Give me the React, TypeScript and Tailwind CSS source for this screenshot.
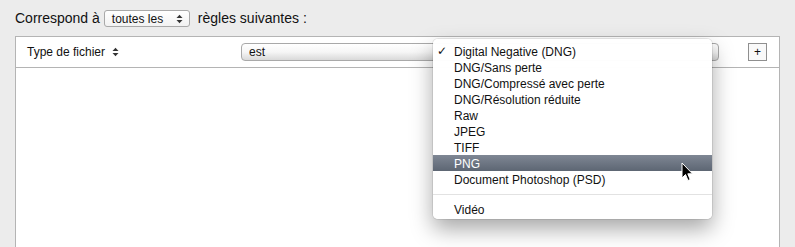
import React from "react";

const items = [
  "Digital Negative (DNG)",
  "DNG/Sans perte",
  "DNG/Compressé avec perte",
  "DNG/Résolution réduite",
  "Raw",
  "JPEG",
  "TIFF",
  "PNG",
  "Document Photoshop (PSD)",
];

function UpDown({ className = "" }: { className?: string }) {
  return (
    <svg width="7" height="10" viewBox="0 0 7 10" className={className}>
      <path d="M0.5 4 L3.5 0.8 L6.5 4 Z" fill="#333" />
      <path d="M0.5 6 L3.5 9.2 L6.5 6 Z" fill="#333" />
    </svg>
  );
}

export default function App() {
  return (
    <div className="relative w-[795px] h-[247px] overflow-hidden bg-[#ececec] text-[#111] font-['Liberation_Sans',Arial,sans-serif]">
      <div className="flex items-center h-[17px] mt-[10px] pl-[15px] text-[14px]">
        <span>Correspond à</span>
        <div className="ml-[4px] flex items-center w-[86px] h-[17px] rounded-[3px] border border-[#a9a9a9] bg-gradient-to-b from-white to-[#f2f2f2] pl-[7px] pr-[6px] text-[12px]">
          <span className="flex-1 pt-px">toutes les</span>
          <UpDown />
        </div>
        <span className="ml-[8px]">règles suivantes :</span>
      </div>

      <div className="ml-[15px] mt-[9px] w-[765px] h-[240px] border border-[#b4b4b4] bg-white">
        <div className="flex items-center h-[31px] border-b border-[#b4b4b4] text-[12px]">
          <div className="flex items-center w-[225px] pl-[11px]">
            <span>Type de fichier</span>
            <UpDown className="ml-[7px]" />
          </div>
          <div className="flex items-center w-[478px] h-[18px] rounded-[4px] border border-[#a9a9a9] bg-gradient-to-b from-white via-[#f6f6f6] to-[#d9d9d9] pl-[7px]">
            est
          </div>
          <div className="ml-[29px] flex items-center justify-center w-[19px] h-[18px] border border-[#8f8f8f] bg-[#f9f9f9] text-[12px] leading-none">
            +
          </div>
        </div>
      </div>

      {/* Dropdown menu */}
      <div className="absolute left-[433px] top-[39px] w-[279px] rounded-[5px] bg-white/[0.98] pt-[4px] pb-[2px] shadow-[0_10px_22px_rgba(0,0,0,0.35),0_0_0_1px_rgba(0,0,0,0.08)] text-[12px]">
        {items.map((it, i) => (
          <div
            key={it}
            className={
              "relative flex items-center h-[16px] pl-[21px] pt-px " +
              (i === 7
                ? "bg-gradient-to-b from-[#7f8794] to-[#5d6673] text-white"
                : "text-[#111]")
            }
          >
            {i === 0 && (
              <span className="absolute left-[4px] top-0 text-[12px] font-bold leading-[16px] font-['DejaVu_Sans',sans-serif]">
                ✓
              </span>
            )}
            {it}
          </div>
        ))}
        <div className="h-[14px] flex items-center">
          <div className="w-full h-px bg-[#e2e2e2]" />
        </div>
        <div className="flex items-center h-[16px] pl-[21px] pt-px">Vidéo</div>
      </div>

      {/* Cursor */}
      <svg
        className="absolute left-[681px] top-[162px]"
        width="14"
        height="21"
        viewBox="0 0 14 21"
      >
        <path
          d="M1 1 L1 16 L4.5 12.5 L7 18.5 L9.2 17.5 L6.8 11.8 L11.5 11.8 Z"
          fill="#000"
          stroke="#fff"
          strokeWidth="1"
          strokeLinejoin="round"
        />
      </svg>
    </div>
  );
}
